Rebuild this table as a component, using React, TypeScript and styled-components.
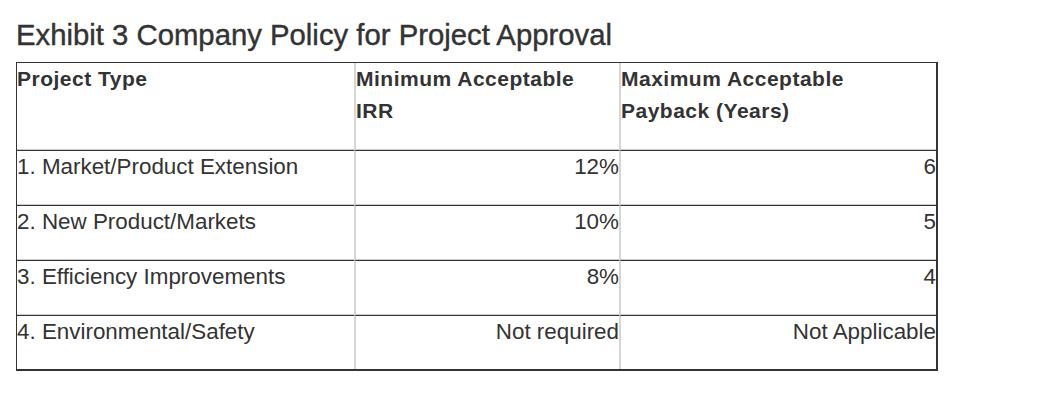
import styled, { createGlobalStyle } from 'styled-components';

const GlobalStyle = createGlobalStyle`
  body {
    margin: 0;
    background: #ffffff;
    font-family: "Liberation Sans", Arial, Helvetica, sans-serif;
    color: #333333;
  }
`;

const Page = styled.div`
  padding: 18px 16px 0 16px;
`;

const Title = styled.h1`
  margin: 0 0 10px 0;
  font-size: 29.3px;
  line-height: 34px;
  font-weight: normal;
  color: #333333;
  -webkit-text-stroke: 0.4px #333333;
`;

const Table = styled.table`
  border-collapse: separate;
  border-spacing: 0;
  width: 922px;
  border-top: 1px solid #333333;
  border-left: 1px solid #333333;
  border-bottom: 2px solid #333333;
  border-right: 2px solid #333333;
`;

const HeadCell = styled.th<{ $width: number }>`
  width: ${(p) => p.$width}px;
  height: 86px;
  padding: 0;
  text-align: left;
  vertical-align: top;
  font-size: 21px;
  line-height: 32px;
  font-weight: bold;
  letter-spacing: 0.5px;
  color: #333333;
  border-bottom: 1px solid #cccccc;
  & + & {
    border-left: 2px solid #d6d6d6;
  }
`;

const Cell = styled.td<{ $align?: 'left' | 'right'; $last?: boolean }>`
  height: ${(p) => (p.$last ? 53 : 53)}px;
  padding: 0;
  text-align: ${(p) => p.$align ?? 'left'};
  vertical-align: top;
  font-size: 22.4px;
  line-height: 32px;
  color: #333333;
  border-top: 1px solid #333333;
  border-bottom: ${(p) => (p.$last ? 'none' : '1px solid #cccccc')};
  & + & {
    border-left: 2px solid #d6d6d6;
  }
`;

interface PolicyRow {
  type: string;
  irr: string;
  payback: string;
}

const rows: PolicyRow[] = [
  { type: '1. Market/Product Extension', irr: '12%', payback: '6' },
  { type: '2. New Product/Markets', irr: '10%', payback: '5' },
  { type: '3. Efficiency Improvements', irr: '8%', payback: '4' },
  { type: '4. Environmental/Safety', irr: 'Not required', payback: 'Not Applicable' },
];

function App() {
  return (
    <>
      <GlobalStyle />
      <Page>
        <Title>Exhibit 3 Company Policy for Project Approval</Title>
        <Table>
          <thead>
            <tr>
              <HeadCell $width={337}>Project Type</HeadCell>
              <HeadCell $width={263}>
                Minimum Acceptable
                <br />
                IRR
              </HeadCell>
              <HeadCell $width={315}>
                Maximum Acceptable
                <br />
                Payback (Years)
              </HeadCell>
            </tr>
          </thead>
          <tbody>
            {rows.map((row, i) => {
              const last = i === rows.length - 1;
              return (
                <tr key={row.type}>
                  <Cell $last={last}>{row.type}</Cell>
                  <Cell $align="right" $last={last}>
                    {row.irr}
                  </Cell>
                  <Cell $align="right" $last={last}>
                    {row.payback}
                  </Cell>
                </tr>
              );
            })}
          </tbody>
        </Table>
      </Page>
    </>
  );
}

export default App;
